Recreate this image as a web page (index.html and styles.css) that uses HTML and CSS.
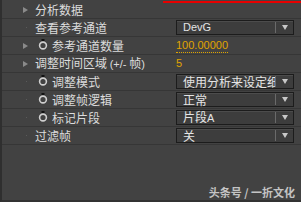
FILE: index.html
```html
<!DOCTYPE html>
<html>
<head>
<meta charset="utf-8">
<link rel="stylesheet" href="styles.css">
</head>
<body>
<div class="panel">
  <div class="redline"></div>
  <div class="row">
    <div class="label"><span class="twisty"></span><span class="txt">分析数据</span></div>
  </div>
  <div class="row">
    <div class="label"><span class="dot"></span><span class="txt">查看参考通道</span></div>
    <div class="value"><div class="select"><span class="sel-text lat">DevG</span><span class="sel-div"></span><span class="sel-arrow"></span></div></div>
  </div>
  <div class="row">
    <div class="label"><span class="twisty"></span><svg class="watch" width="10" height="11" viewBox="0 0 10 11"><rect x="3.5" y="0" width="3" height="2" fill="#111"/><circle cx="5" cy="6.5" r="3.4" fill="none" stroke="#cfcfcf" stroke-width="1.6"/></svg><span class="txt">参考通道数量</span></div>
    <div class="value"><span class="num lat">100.00000</span></div>
  </div>
  <div class="row">
    <div class="label"><span class="twisty"></span><span class="txt">调整时间区域 <span class="lat">(+/-</span> 帧<span class="lat">)</span></span></div>
    <div class="value"><span class="num plain lat">5</span></div>
  </div>
  <div class="row">
    <div class="label"><span class="dot"></span><svg class="watch" width="10" height="11" viewBox="0 0 10 11"><rect x="3.5" y="0" width="3" height="2" fill="#111"/><circle cx="5" cy="6.5" r="3.4" fill="none" stroke="#cfcfcf" stroke-width="1.6"/></svg><span class="txt">调整模式</span></div>
    <div class="value"><div class="select"><span class="sel-text clip">使用分析来设定细</span><span class="sel-div"></span><span class="sel-arrow"></span></div></div>
  </div>
  <div class="row">
    <div class="label"><span class="dot"></span><svg class="watch" width="10" height="11" viewBox="0 0 10 11"><rect x="3.5" y="0" width="3" height="2" fill="#111"/><circle cx="5" cy="6.5" r="3.4" fill="none" stroke="#cfcfcf" stroke-width="1.6"/></svg><span class="txt">调整帧逻辑</span></div>
    <div class="value"><div class="select"><span class="sel-text">正常</span><span class="sel-div"></span><span class="sel-arrow"></span></div></div>
  </div>
  <div class="row">
    <div class="label"><span class="dot"></span><svg class="watch" width="10" height="11" viewBox="0 0 10 11"><rect x="3.5" y="0" width="3" height="2" fill="#111"/><circle cx="5" cy="6.5" r="3.4" fill="none" stroke="#cfcfcf" stroke-width="1.6"/></svg><span class="txt">标记片段</span></div>
    <div class="value"><div class="select"><span class="sel-text">片段<span class="lat">A</span></span><span class="sel-div"></span><span class="sel-arrow"></span></div></div>
  </div>
  <div class="row">
    <div class="label"><span class="dot"></span><span class="txt">过滤帧</span></div>
    <div class="value"><div class="select"><span class="sel-text">关</span><span class="sel-div"></span><span class="sel-arrow"></span></div></div>
  </div>
  <div class="watermark">头条号 / 一折文化</div>
</div>
</body>
</html>
```

FILE: styles.css
```css
html, body {
  margin: 0;
  padding: 0;
}
body {
  width: 301px;
  height: 202px;
  overflow: hidden;
  background: #424242;
  font-family: "Noto Sans CJK SC", "Liberation Sans", sans-serif;
  font-size: 12px;
  color: #dcdcdc;
}
.panel {
  position: relative;
  box-sizing: border-box;
  width: 301px;
  height: 202px;
  padding-top: 1px;
  border-left: 2px solid #2f2f2f;
  border-bottom: 2px solid #333;
}
.redline {
  position: absolute;
  left: 161px;
  top: 1px;
  width: 140px;
  height: 2px;
  background: #e60000;
}
.row {
  display: flex;
  align-items: center;
  height: 17px;
  border-bottom: 1px solid #363636;
}
.label {
  width: 174px;
  display: flex;
  align-items: center;
  white-space: nowrap;
}
.twisty {
  width: 0;
  height: 0;
  margin-left: 21px;
  margin-right: 7px;
  border-top: 3.5px solid transparent;
  border-bottom: 3.5px solid transparent;
  border-left: 5px solid #8a8a8a;
}
.dot {
  width: 1px;
  height: 1px;
  margin-left: 24px;
  margin-right: 8px;
  background: #5a5a5a;
}
.watch {
  margin-left: 3px;
  margin-right: 4px;
  margin-top: -2px;
}
.txt {
  line-height: 17px;
}
.lat {
  font-family: "Liberation Sans", sans-serif;
  font-size: 11px;
}
.value {
  display: flex;
  align-items: center;
}
.num {
  color: #e0a400;
  line-height: 13px;
  border-bottom: 1px dotted #e0a400;
}
.num.plain {
  border-bottom: none;
}
.select {
  box-sizing: border-box;
  width: 118px;
  height: 15px;
  display: flex;
  align-items: center;
  background: #3d3d3d;
  border: 1px solid #1c1c1c;
  box-shadow: inset 0 1px 0 #4c4c4c;
}
.sel-text {
  width: 92px;
  padding-left: 6px;
  white-space: nowrap;
  line-height: 13px;
  color: #e4e4e4;
}
.sel-text.clip {
  overflow: hidden;
}
.sel-div {
  width: 1px;
  height: 11px;
  background: #6a6a6a;
}
.sel-arrow {
  width: 0;
  height: 0;
  margin-left: 6px;
  border-left: 3.5px solid transparent;
  border-right: 3.5px solid transparent;
  border-top: 5px solid #c8c8c8;
}
.watermark {
  position: absolute;
  right: 6px;
  top: 185px;
  font-size: 11px;
  font-weight: bold;
  color: #c4c4c4;
  line-height: 14px;
}
```
